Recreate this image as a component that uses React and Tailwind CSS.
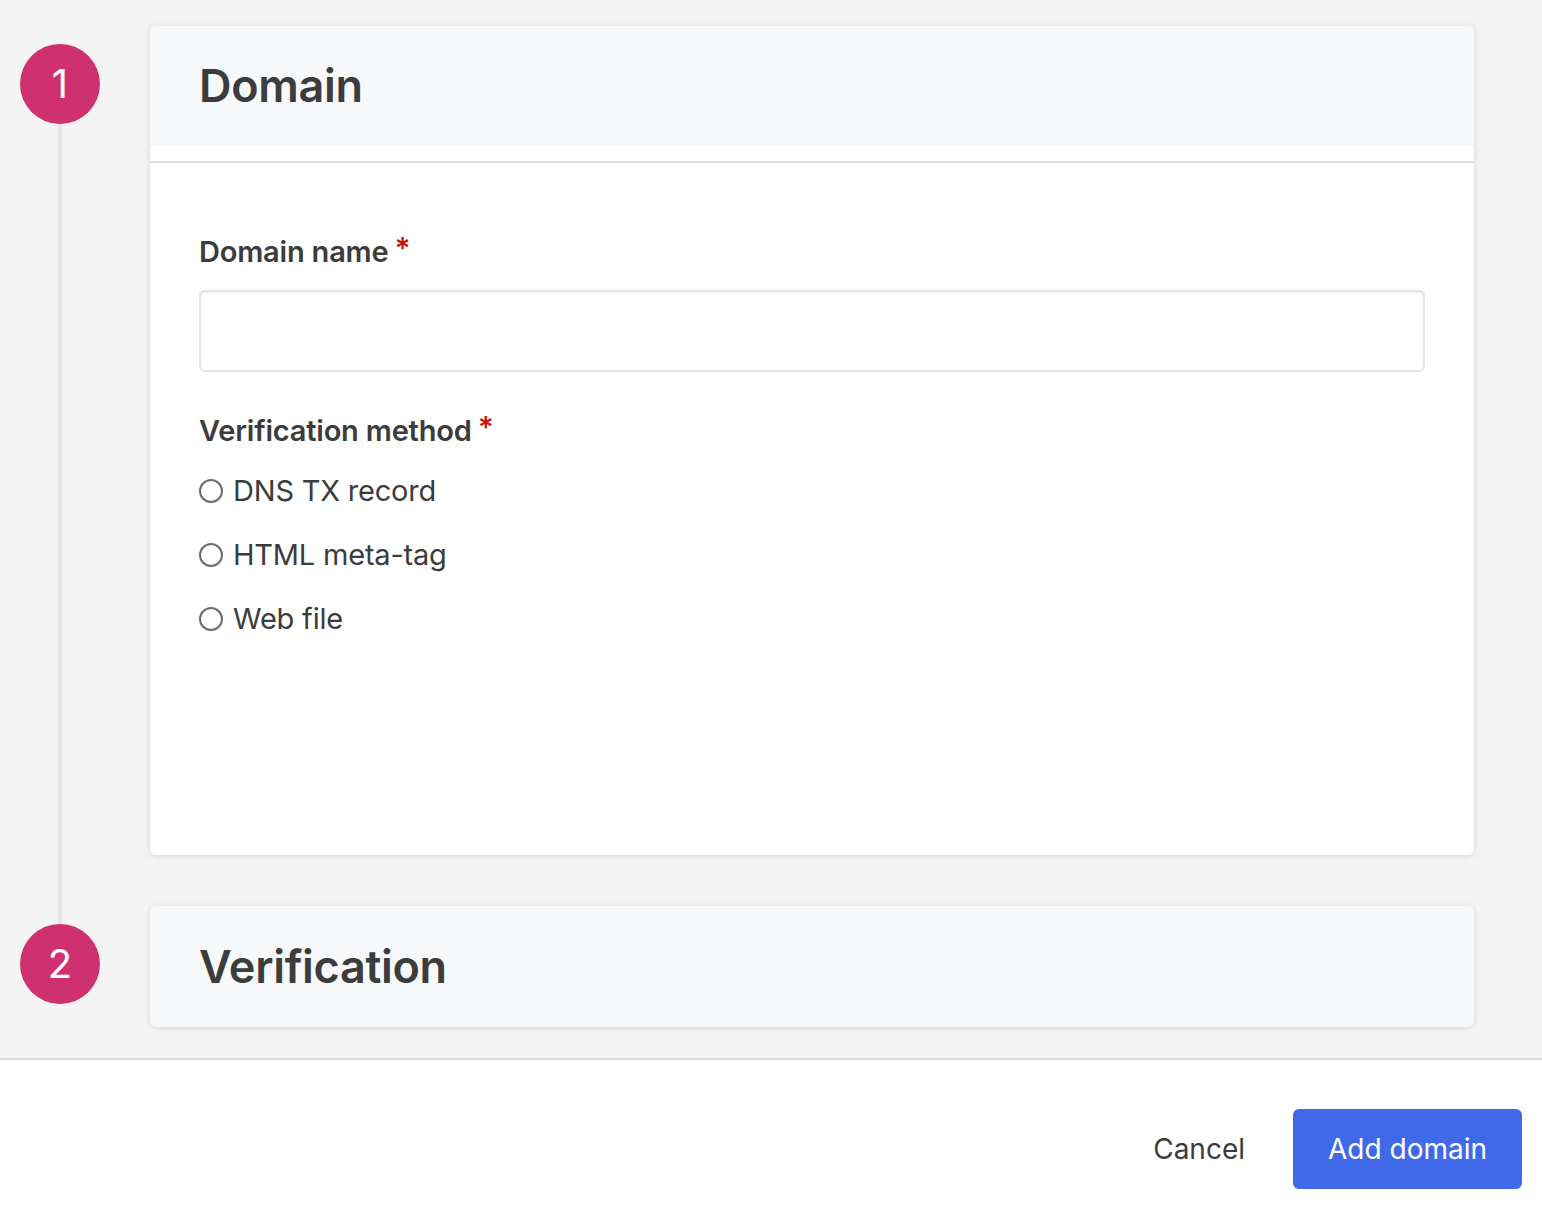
import React from "react";

const font = { fontFamily: "Inter, 'Noto Sans', sans-serif" };

const StepCircle = ({ n }) => (
  <div className="w-20 h-20 rounded-full bg-[#cf3070] text-white flex items-center justify-center text-[40px] font-normal leading-none shrink-0">
    {n}
  </div>
);

const Radio = ({ label }) => (
  <label className="flex items-center gap-[10px] h-[32px] cursor-pointer">
    <span className="w-[24px] h-[24px] rounded-full border-2 border-[#6a6a6a] bg-white shrink-0" />
    <span className="text-[29px] text-[#3c3c3c] tracking-[-0.2px]">{label}</span>
  </label>
);

const Label = ({ children }) => (
  <div className="text-[29px] font-semibold text-[#3c3c3c] leading-[36px] tracking-[-0.2px]">
    {children}
    <span className="text-[#c9190b] ml-[6px] text-[30px] relative -top-[3px]">*</span>
  </div>
);

const App = () => (
  <div className="min-h-[1206px] flex flex-col bg-white" style={font}>
    <div className="bg-[#f4f4f4] pt-[26px] pb-[31px] border-b-2 border-[#d8d8dc]">
      <div className="grid grid-cols-[150px_1fr] pr-[68px]">
        <div className="row-span-2 flex flex-col items-center pt-[18px] pb-[23px] w-[120px]">
          <StepCircle n="1" />
          <div className="w-[4px] flex-1 bg-[#e6e6e6]" />
          <StepCircle n="2" />
        </div>

        <section className="bg-white rounded-[6px] shadow-[0_1px_6px_rgba(0,0,0,0.13)] h-[829px] flex flex-col overflow-hidden">
          <div className="bg-[#f7f8fa] h-[120px] flex items-center px-[49px]">
            <h2 className="text-[45px] font-semibold text-[#3c3c3c] tracking-[-0.3px]">Domain</h2>
          </div>
          <div className="h-[15px] bg-white" />
          <div className="h-[2px] bg-[#dcdce0]" />
          <div className="px-[49px] pt-[70px]">
            <Label>Domain name</Label>
            <input
              type="text"
              className="mt-[20px] w-full h-[82px] rounded-[6px] border-2 border-[#e4e4e4] bg-white shadow-[inset_0_1px_2px_rgba(0,0,0,0.05)] outline-none px-4 text-[26px]"
            />
            <div className="mt-[40px]">
              <Label>Verification method</Label>
            </div>
            <div className="mt-[26px] flex flex-col gap-[32px]">
              <Radio label="DNS TX record" />
              <Radio label="HTML meta-tag" />
              <Radio label="Web file" />
            </div>
          </div>
        </section>

        <section className="mt-[51px] bg-[#f7f8fa] rounded-[6px] shadow-[0_1px_6px_rgba(0,0,0,0.13)] h-[121px] flex items-center px-[49px]">
          <h2 className="text-[45px] font-semibold text-[#3c3c3c] tracking-[-0.3px]">Verification</h2>
        </section>
      </div>
    </div>

    <div className="flex justify-end items-center pt-[49px] pr-[20px] gap-[48px]">
      <button className="text-[28px] text-[#3c3c3c]">Cancel</button>
      <button className="h-[80px] w-[229px] rounded-[6px] bg-[#3f69e9] text-white text-[28px]">
        Add domain
      </button>
    </div>
  </div>
);

export default App;
